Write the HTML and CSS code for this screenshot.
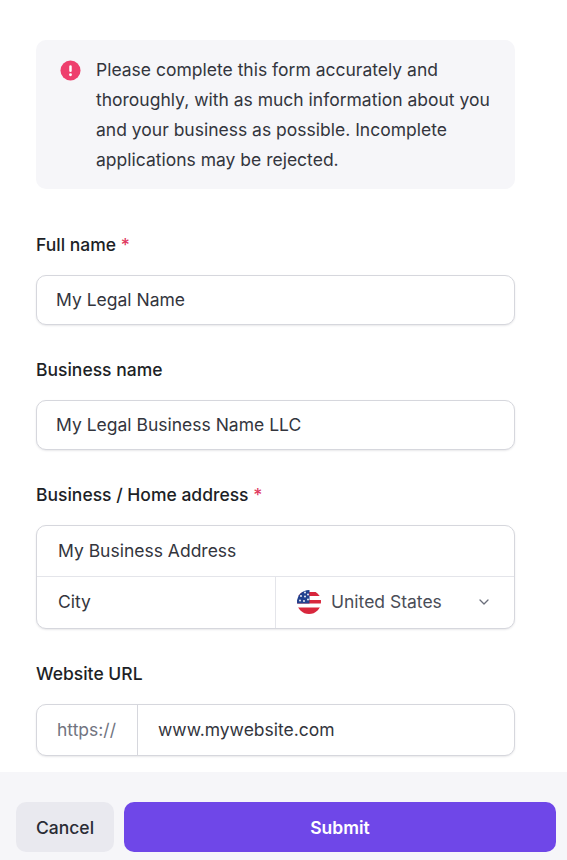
FILE: index.html
```html
<!DOCTYPE html>
<html lang="en">
<head>
    <meta charset="UTF-8">
    <meta name="viewport" content="width=device-width, initial-scale=1.0">
    <title>Application form</title>
    <link rel="stylesheet" href="styles.css">
</head>
<body>
    <div class="form-body">
        <div class="notice">
            <svg class="notice-icon" viewBox="0 0 22 22" aria-hidden="true">
                <circle cx="11" cy="11" r="10.5" fill="#ee3f6d"/>
                <rect x="9.7" y="5.4" width="2.6" height="7.2" rx="1.3" fill="#fff"/>
                <circle cx="11" cy="15.5" r="1.5" fill="#fff"/>
            </svg>
            <p>Please complete this form accurately and thoroughly, with as much information about you and your business as possible. Incomplete applications may be rejected.</p>
        </div>

        <div class="field">
            <label>Full name <span class="req">*</span></label>
            <div class="box"><div class="cell">My Legal Name</div></div>
        </div>

        <div class="field">
            <label>Business name</label>
            <div class="box"><div class="cell">My Legal Business Name LLC</div></div>
        </div>

        <div class="field">
            <label>Business / Home address <span class="req">*</span></label>
            <div class="box">
                <div class="cell address">My Business Address</div>
                <div class="row row-split">
                    <div class="cell city">City</div>
                    <div class="cell country">
                        <svg class="flag" viewBox="0 0 24 24" aria-hidden="true">
                            <defs>
                                <clipPath id="flagClip"><circle cx="12" cy="12" r="12"/></clipPath>
                            </defs>
                            <g clip-path="url(#flagClip)">
                                <rect width="24" height="24" fill="#fff"/>
                                <rect y="2" width="24" height="4" fill="#d8273d"/>
                                <rect y="10" width="24" height="3.5" fill="#d8273d"/>
                                <rect y="17.5" width="24" height="6.5" fill="#d8273d"/>
                                <rect width="12.5" height="13.5" fill="#22418f"/>
                                <g fill="#fff">
                                    <circle cx="4" cy="6" r="0.9"/>
                                    <circle cx="8" cy="2.5" r="0.9"/>
                                    <circle cx="8" cy="6.5" r="0.9"/>
                                    <circle cx="11" cy="4.5" r="0.9"/>
                                    <circle cx="3" cy="10.5" r="0.9"/>
                                    <circle cx="7" cy="11" r="0.9"/>
                                    <circle cx="11" cy="9.5" r="0.9"/>
                                </g>
                            </g>
                        </svg>
                        <span class="country-name">United States</span>
                        <svg class="chevron" viewBox="0 0 10 6" aria-hidden="true">
                            <path d="M1 1l4 4 4-4" fill="none" stroke="#6b6f7b" stroke-width="1.3" stroke-linecap="round" stroke-linejoin="round"/>
                        </svg>
                    </div>
                </div>
            </div>
        </div>

        <div class="field">
            <label>Website URL</label>
            <div class="box row">
                <div class="cell prefix">https://</div>
                <div class="cell url">www.mywebsite.com</div>
            </div>
        </div>
    </div>

    <div class="footer">
        <button class="btn btn-cancel">Cancel</button>
        <button class="btn btn-submit">Submit</button>
    </div>
</body>
</html>
```

FILE: styles.css
```css
* {
    box-sizing: border-box;
}
html, body {
    margin: 0;
    padding: 0;
}
body {
    font-family: Inter, "Liberation Sans", sans-serif;
    background: #fff;
    color: #33353d;
    width: 567px;
    height: 860px;
    overflow: hidden;
}
.form-body {
    width: 479px;
    margin-left: 36px;
    padding-top: 40px;
    height: 772px;
}
.notice {
    display: flex;
    gap: 15px;
    height: 149px;
    padding: 15px 20px 15px 24px;
    background: #f6f6f9;
    border-radius: 10px;
}
.notice-icon {
    flex: none;
    width: 21px;
    height: 21px;
    margin-top: 4.5px;
}
.notice p {
    margin: 0;
    font-size: 17.5px;
    line-height: 30px;
    color: #33353d;
}
.field {
    margin-top: 33px;
}
.notice + .field {
    margin-top: 44px;
}
.field label {
    display: block;
    height: 24px;
    margin-bottom: 18px;
    font-size: 17.5px;
    font-weight: 500;
    line-height: 24px;
    color: #1d1f26;
}
.req {
    color: #e0395f;
}
.box {
    border: 1px solid #d6d7dd;
    border-radius: 10px;
    box-shadow: 0 1px 2px rgba(30, 30, 50, 0.1);
    background: #fff;
}
.cell {
    height: 48px;
    padding: 0 19px 2px;
    display: flex;
    align-items: center;
    font-size: 17.5px;
    color: #33353d;
}
.row {
    display: flex;
}
.row-split {
    border-top: 1px solid #e4e5ea;
}
.address {
    height: 50px;
    padding-left: 21px;
}
.city {
    width: 239px;
    height: 51px;
    padding-left: 21px;
    border-right: 1px solid #e4e5ea;
}
.country {
    flex: 1;
    height: 51px;
    padding: 0 25px 2px 21px;
}
.flag {
    flex: none;
    width: 24px;
    height: 24px;
}
.country-name {
    margin-left: 10px;
    flex: 1;
    color: #4a4d57;
}
.chevron {
    width: 10px;
    height: 6px;
}
.prefix {
    width: 101px;
    height: 50px;
    padding: 0 20px 2px;
    color: #71747f;
    border-right: 1px solid #d6d7dd;
}
.url {
    height: 50px;
    flex: 1;
    padding: 0 20px 2px;
}
.footer {
    display: flex;
    gap: 10px;
    height: 88px;
    padding: 30px 11px 8px 16px;
    background: #f6f6f9;
}
.btn {
    height: 50px;
    border: none;
    border-radius: 10px;
    font-family: inherit;
    font-size: 17.5px;
    font-weight: 500;
}
.btn-cancel {
    width: 98px;
    background: #e9e9ef;
    color: #2a2c35;
}
.btn-submit {
    flex: 1;
    background: #6f47e8;
    color: #fff;
    font-weight: 600;
}
```
